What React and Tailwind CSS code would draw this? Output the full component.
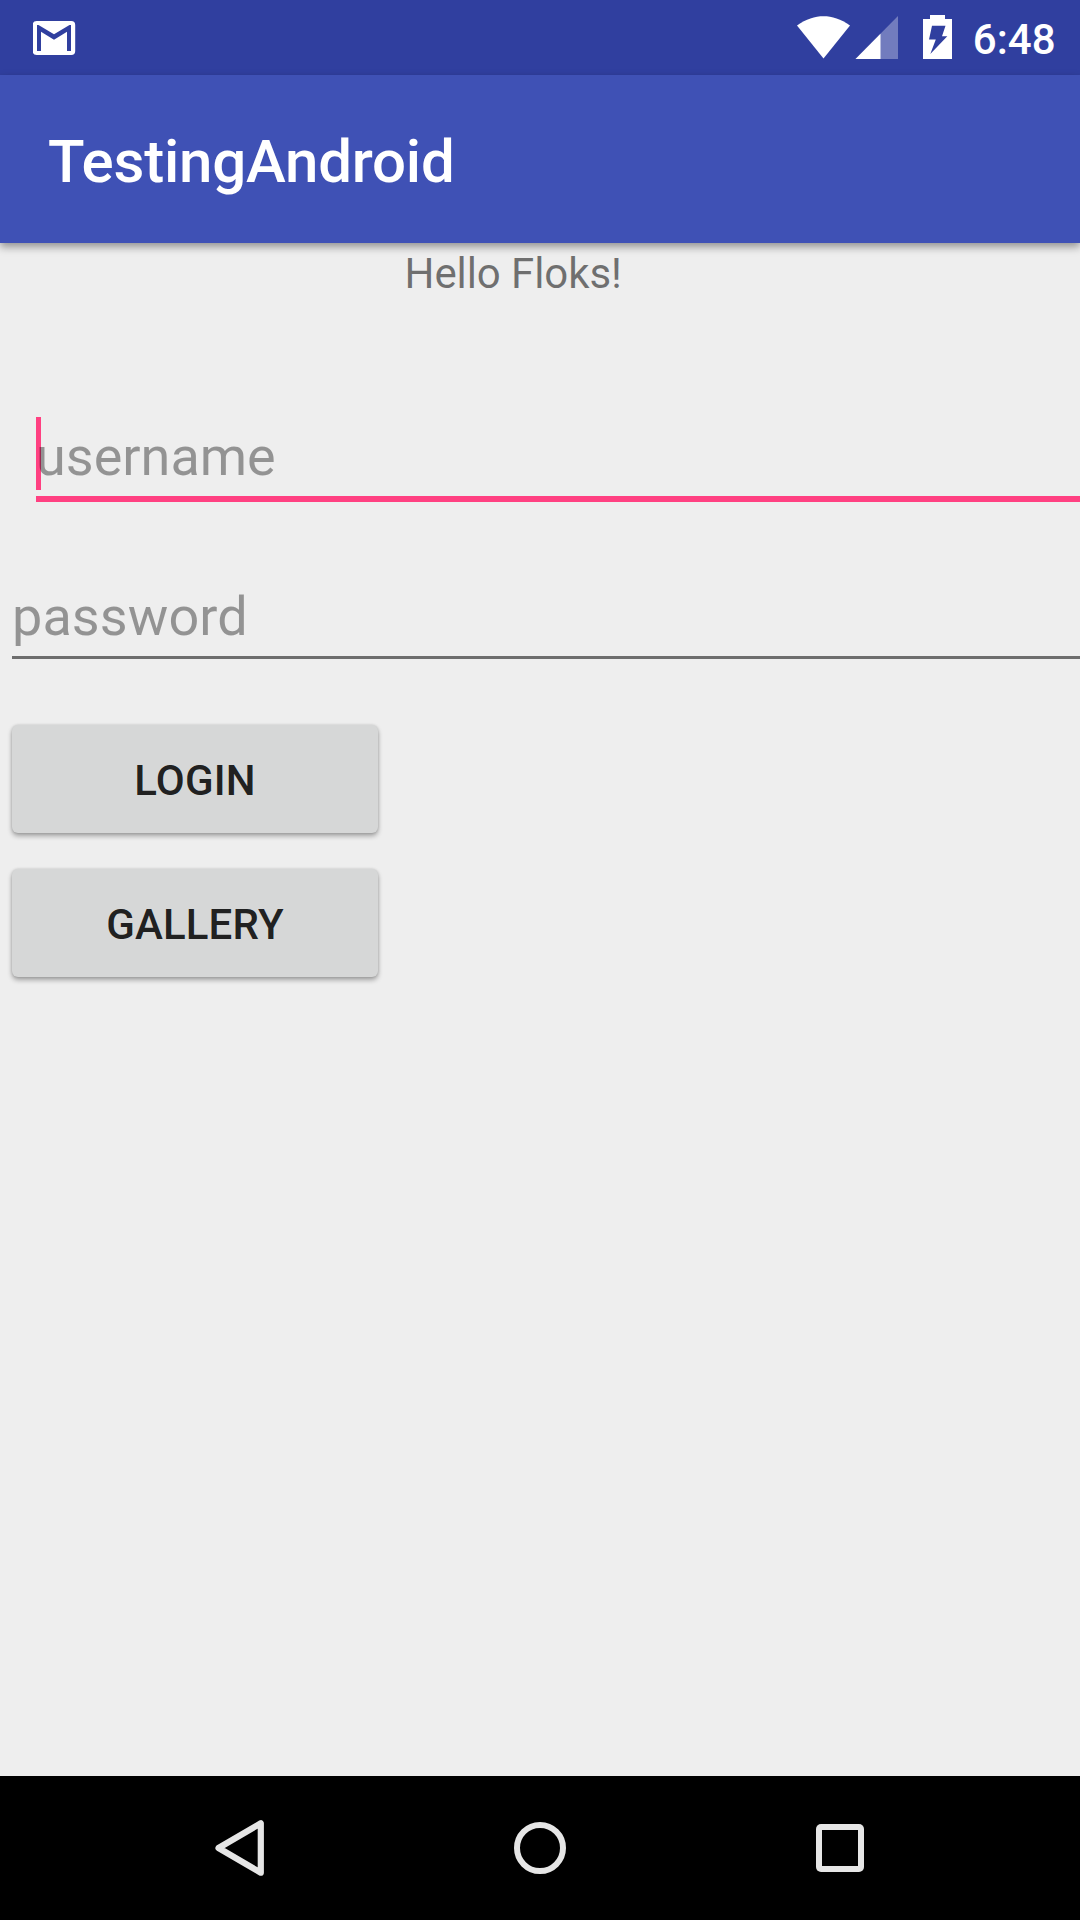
function StatusBar() {
  return (
    <div className="flex h-[75px] shrink-0 items-start bg-[#303f9f] text-white">
      <svg className="ml-[33px] mt-[21px] h-[34px] w-[43px]" viewBox="33 21 43 34">
        <rect x="32.7" y="21" width="42.5" height="34" rx="4" fill="#fff" />
        <path d="M37 51V25H38.5L54 34.2L69.5 25H71V51H67V31.8L54 39.8L41 31.8V51Z" fill="#303f9f" />
      </svg>
      <svg className="ml-auto mt-[15px] h-[45px] w-[54px]" viewBox="797 15 54 45">
        <path d="M797 25.5C806 18.8 815 16.2 823.5 16.2C832 16.2 841 18.8 850 25.5L823.5 58.5Z" fill="#fff" />
      </svg>
      <svg className="ml-[4px] mt-[16px] h-[43px] w-[43px]" viewBox="855 16 43 43">
        <path d="M855.5 59L898 16V59Z" fill="#fff" fillOpacity="0.32" />
        <path d="M855.5 59L880.5 33.7V59Z" fill="#fff" />
      </svg>
      <svg className="ml-[25px] mt-[15px] h-[44px] w-[29px]" viewBox="923 15 29 44">
        <path d="M923 19H930V15H945V19H952V59H923Z" fill="#fff" />
        <path d="M932 25.7H945.5L942 36.2H947.3L930.3 54L935.8 39.5H929Z" fill="#303f9f" />
      </svg>
      <span className="ml-[20.5px] mr-[24.5px] mt-[2px] text-[42px] leading-[75px] font-medium">6:48</span>
    </div>
  );
}

function Field({ label, focused }) {
  return focused ? (
    <div className="ml-[36px] mt-[113px] h-[85px] border-b-[6px] border-[#ff4081]">
      <div className="h-[73px] border-l-[5px] border-[#ff4081]">
        <span className="-ml-[5px] block text-[54px] leading-[79px] text-black/38">{label}</span>
      </div>
    </div>
  ) : (
    <div className="ml-[12px] mt-[74px] h-[83px] border-b-[3px] border-[#6d6d6d]">
      <span className="block text-[54px] leading-[81px] tracking-[0.08px] text-black/38">{label}</span>
    </div>
  );
}

function RaisedButton({ children }) {
  return (
    <button className="block h-[108px] w-[366px] rounded-[6px] bg-[#d6d7d7] pt-[3px] text-[42px] leading-[50px] font-medium tracking-[0.15px] text-black/87 shadow-[0_3px_5px_rgba(0,0,0,0.32),0_0_3px_rgba(0,0,0,0.14)]">
      {children}
    </button>
  );
}

export default function App() {
  return (
    <div className="flex h-[1920px] w-[1080px] flex-col overflow-hidden bg-[#eeeeee] font-['Roboto',sans-serif]">
      <StatusBar />
      <header className="flex h-[168px] shrink-0 items-center bg-[#3f51b5] pl-[48px] pt-[5px] shadow-[0_4px_8px_rgba(0,0,0,0.38)]">
        <h1 className="text-[60px] leading-[70px] font-medium tracking-[-0.22px] text-white">TestingAndroid</h1>
      </header>
      <main className="flex-1">
        <p className="ml-[404.5px] h-[61px] text-[42px] leading-[61px] tracking-[-0.08px] text-black/54">Hello Floks!</p>
        <Field label="username" focused />
        <Field label="password" />
        <div className="ml-[12px] mt-[66px] flex flex-col gap-[36px]">
          <RaisedButton>LOGIN</RaisedButton>
          <RaisedButton>GALLERY</RaisedButton>
        </div>
      </main>
      <nav className="flex h-[144px] shrink-0 items-start bg-black">
        <svg className="ml-[214px] mt-[43px] h-[58px] w-[51px]" viewBox="214 1819 51 58" fill="none" stroke="#e6e6e6" strokeLinejoin="round">
          <path d="M260.8 1823.3V1872.7L218.5 1848Z" strokeWidth="6.2" />
        </svg>
        <svg className="ml-[249px] mt-[46px] h-[52px] w-[52px]" viewBox="0 0 52 52" fill="none" stroke="#e6e6e6" strokeWidth="6">
          <circle cx="26" cy="26" r="23" />
        </svg>
        <div className="ml-[250px] mt-[48px] h-[48px] w-[48px] rounded-[5px] bg-[#e6e6e6] p-[6px]">
          <div className="h-full w-full bg-black" />
        </div>
      </nav>
    </div>
  );
}
